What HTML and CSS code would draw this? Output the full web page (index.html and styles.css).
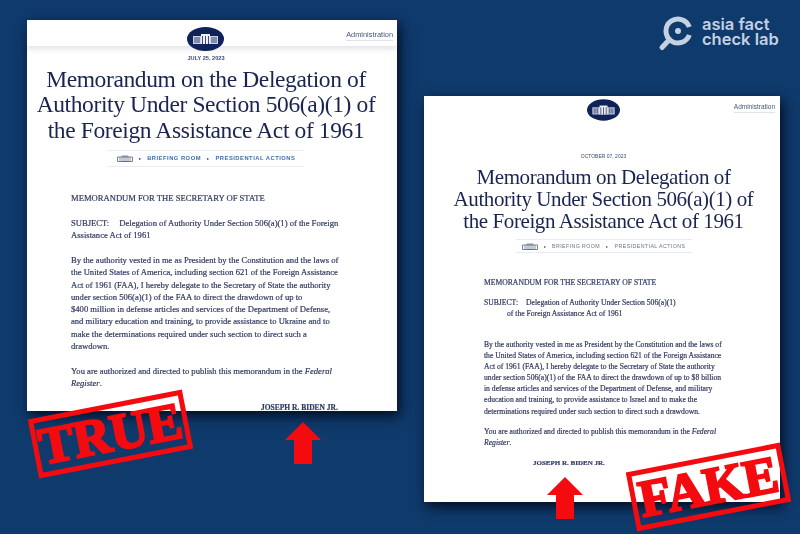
FILE: index.html
```html
<!DOCTYPE html>
<html lang="en">
<head>
<meta charset="utf-8">
<title>Asia Fact Check Lab</title>
<link rel="stylesheet" href="styles.css">
</head>
<body>
<main class="canvas">
  <article class="memo memo-true">
    <header class="memo-head">
      <svg class="seal" viewBox="0 0 37 24"><ellipse cx="18.5" cy="12" rx="18.5" ry="12" fill="#0f2358"/><path d="M6 9h25v8H6z" fill="#ccd3e3"/><path d="M14 7h9v10h-9z" fill="#eef0f6"/><path d="M8 10v6M10 10v6M12 10v6M15.500 9v8M18.500 9v8M21.500 9v8M25 10v6M27 10v6M29 10v6" stroke="#0f2358" stroke-width=".8"/></svg>
      <span class="admin">Administration</span>
    </header>
    <p class="date">JULY 25, 2023</p>
    <h1 class="title">Memorandum on the Delegation of<br>Authority Under Section 506(a)(1) of<br>the Foreign Assistance Act of 1961</h1>
    <nav class="crumbs">
      <svg class="crumb-icon" viewBox="0 0 16 7"><path d="M.5 2h15v4.500H.5z" fill="none" stroke="#5a6580" stroke-width=".8"/><path d="M5 1h6v5.500H5zM7 1v5.500M9 1v5.500M3 2v4.500M13 2v4.500" fill="none" stroke="#5a6580" stroke-width=".7"/></svg>
      <span class="sep">▸</span><span class="crumb">BRIEFING ROOM</span><span class="sep">▸</span><span class="crumb">PRESIDENTIAL ACTIONS</span>
    </nav>
    <div class="body">
      <p>MEMORANDUM FOR THE SECRETARY OF STATE</p>
      <p>SUBJECT:<span class="tab"></span>Delegation of Authority Under Section 506(a)(1) of the Foreign<br>Assistance Act of 1961</p>
      <p>By the authority vested in me as President by the Constitution and the laws of<br>the United States of America, including section 621 of the Foreign Assistance<br>Act of 1961 (FAA), I hereby delegate to the Secretary of State the authority<br>under section 506(a)(1) of the FAA to direct the drawdown of up to<br>$400 million in defense articles and services of the Department of Defense,<br>and military education and training, to provide assistance to Ukraine and to<br>make the determinations required under such section to direct such a<br>drawdown.</p>
      <p>You are authorized and directed to publish this memorandum in the <em>Federal<br>Register</em>.</p>
      <p class="sign">JOSEPH R. BIDEN JR.</p>
    </div>
  </article>

  <article class="memo memo-fake">
    <header class="memo-head">
      <svg class="seal" viewBox="0 0 37 24"><ellipse cx="18.5" cy="12" rx="18.5" ry="12" fill="#0f2358"/><path d="M6 9h25v8H6z" fill="#ccd3e3"/><path d="M14 7h9v10h-9z" fill="#eef0f6"/><path d="M8 10v6M10 10v6M12 10v6M15.500 9v8M18.500 9v8M21.500 9v8M25 10v6M27 10v6M29 10v6" stroke="#0f2358" stroke-width=".8"/></svg>
      <span class="admin">Administration</span>
    </header>
    <p class="date">OCTOBER 07, 2023</p>
    <h1 class="title">Memorandum on Delegation of<br>Authority Under Section 506(a)(1) of<br>the Foreign Assistance Act of 1961</h1>
    <nav class="crumbs">
      <svg class="crumb-icon" viewBox="0 0 16 7"><path d="M.5 2h15v4.500H.5z" fill="none" stroke="#5a6580" stroke-width=".8"/><path d="M5 1h6v5.500H5zM7 1v5.500M9 1v5.500M3 2v4.500M13 2v4.500" fill="none" stroke="#5a6580" stroke-width=".7"/></svg>
      <span class="sep">▸</span><span class="crumb">BRIEFING ROOM</span><span class="sep">▸</span><span class="crumb">PRESIDENTIAL ACTIONS</span>
    </nav>
    <div class="body">
      <p>MEMORANDUM FOR THE SECRETARY OF STATE</p>
      <p class="subject">SUBJECT:<span class="tab"></span>Delegation of Authority Under Section 506(a)(1)<br><span class="indent"></span>of the Foreign Assistance Act of 1961</p>
      <p>By the authority vested in me as President by the Constitution and the laws of<br>the United States of America, including section 621 of the Foreign Assistance<br>Act of 1961 (FAA), I hereby delegate to the Secretary of State the authority<br>under section 506(a)(1) of the FAA to direct the drawdown of up to $8 billion<br>in defense articles and services of the Department of Defense, and military<br>education and training, to provide assistance to Israel and to make the<br>determinations required under such section to direct such a drawdown.</p>
      <p>You are authorized and directed to publish this memorandum in the <em>Federal<br>Register</em>.</p>
      <p class="sign">JOSEPH R. BIDEN JR.</p>
    </div>
  </article>

  <div class="stamp stamp-true">TRUE</div>
  <div class="stamp stamp-fake">FAKE</div>

  <svg class="arrow arrow-left" viewBox="0 0 36 42"><path d="M18 0 36 18H27V42H9V18H0Z" fill="#f40b10"/></svg>
  <svg class="arrow arrow-right" viewBox="0 0 36 42"><path d="M18 0 36 18H27V42H9V18H0Z" fill="#f40b10"/></svg>

  <div class="brand">
    <svg class="brand-mark" viewBox="0 0 36 36"><path d="M31.300 11A12 12 0 1 0 31.300 19" fill="none" stroke="#c3d1e2" stroke-width="5"/><circle cx="20" cy="15" r="3" fill="#c3d1e2"/><path d="M11 24 4 31.500" stroke="#c3d1e2" stroke-width="5" stroke-linecap="round"/></svg>
    <div class="brand-name">asia fact<br>check lab</div>
  </div>
</main>
</body>
</html>
```
FILE: styles.css
```css
* { box-sizing: border-box; }
html, body { margin: 0; padding: 0; }
body { width: 800px; height: 534px; overflow: hidden; background: #0f3a6c; }
.canvas { position: relative; width: 800px; height: 534px; overflow: hidden; }
p, h1 { margin: 0; }

.memo {
  position: absolute;
  background: #fff;
  color: #303a60;
  font-family: "Liberation Serif", serif;
  box-shadow: 3px 5px 12px rgba(0, 5, 20, .85);
}
.memo > * { filter: blur(.25px); }
.memo-true { left: 27px; top: 20px; width: 370px; height: 391px; padding-right: 12px; }
.memo-fake { left: 424px; top: 96px; width: 356px; height: 406px; padding-left: 3px; }

.memo-head { display: flex; justify-content: flex-end; align-items: flex-start; position: relative; }
.memo-true .memo-head { height: 26px; margin-right: -12px; padding: 10px 4px 0 0; box-shadow: 0 3px 6px rgba(60, 70, 100, .15); }
.memo-fake .memo-head { height: 26px; margin-left: -3px; padding: 7px 5px 0 0; }
.seal { position: absolute; }
.memo-true .seal { top: 7px; left: 160px; width: 37px; height: 24px; }
.memo-fake .seal { top: 3px; left: 163px; width: 33px; height: 22px; }
.admin { font-family: "Liberation Sans", sans-serif; color: #47557c; border-bottom: 1px solid #dfe3ec; }
.memo-true .admin { font-size: 7.400px; line-height: 9px; padding-bottom: 1px; }
.memo-fake .admin { font-size: 6.500px; line-height: 8px; padding-bottom: 1px; }

.date { text-align: center; font-family: "Liberation Sans", sans-serif; color: #3d4a70; }
.memo-true .date { margin-top: 7.500px; font-size: 5.600px; line-height: 8px; font-weight: 700; }
.memo-fake .date { margin-top: 30px; font-size: 5px; line-height: 8px; }

.title { text-align: center; font-weight: 400; color: #1a2450; white-space: nowrap; }
.memo-true .title { margin-top: 5.500px; font-size: 23.500px; letter-spacing: -.38px; line-height: 25.300px; }
.memo-fake .title { margin-top: 6px; font-size: 21px; letter-spacing: -.42px; line-height: 22px; }

.crumbs {
  display: flex; align-items: center; justify-content: center;
  border-top: 1px solid #e9ecf2; border-bottom: 1px solid #e9ecf2;
  font-family: "Liberation Sans", sans-serif; white-space: nowrap;
}
.memo-true .crumbs { margin: 7px auto 0; width: 196px; height: 17px; gap: 6px; font-size: 5.800px; letter-spacing: .5px; color: #3f6db0; font-weight: 700; }
.memo-fake .crumbs { margin: 7px auto 0; width: 176px; height: 14px; gap: 6px; font-size: 5.300px; letter-spacing: .4px; color: #6b7488; }
.crumb-icon { width: 16px; height: 7px; }
.sep { font-size: 4px; color: #44506e; }

.body { white-space: nowrap; -webkit-text-stroke: .2px currentColor; }
.memo-true .body { padding: 25px 0 0 44px; font-size: 8.600px; line-height: 12.300px; }
.memo-true .body p + p { margin-top: 12.600px; }
.memo-true .tab { display: inline-block; width: 10px; }
.memo-true .sign { margin-left: 190px; font-size: 7.500px; font-weight: 700; margin-top: 12px !important; }
.memo-fake .body { padding: 24px 0 0 57px; font-size: 7.650px; line-height: 11.170px; }
.memo-fake .body p + p { margin-top: 9px; }
.memo-fake .subject { margin-bottom: 19px; }
.memo-fake .tab { display: inline-block; width: 8px; }
.memo-fake .indent { display: inline-block; width: 23px; }
.memo-fake .sign { margin-left: 49px; font-size: 7px; font-weight: 700; margin-top: 10px !important; }

.stamp {
  position: absolute; width: 157px; height: 60px;
  border: 5px solid #f40b10; color: #f40b10;
  font: 700 52px/50px "Liberation Serif", serif;
  -webkit-text-stroke: 2.400px #f40b10;
  text-align: center; white-space: nowrap;
  transform: rotate(-11deg);
}
.stamp-true { left: 32px; top: 404px; }
.stamp-fake { left: 630px; top: 457px; }

.arrow { position: absolute; width: 36px; height: 42px; }
.arrow-left { left: 285px; top: 422px; }
.arrow-right { left: 547px; top: 477px; }

.brand { position: absolute; left: 658px; top: 16px; display: flex; gap: 8px; align-items: flex-start; }
.brand-mark { width: 36px; height: 36px; }
.brand-name { font: 600 16.500px/15px "Inter", sans-serif; color: #c3d1e2; white-space: nowrap; margin-top: 1px; }
```
